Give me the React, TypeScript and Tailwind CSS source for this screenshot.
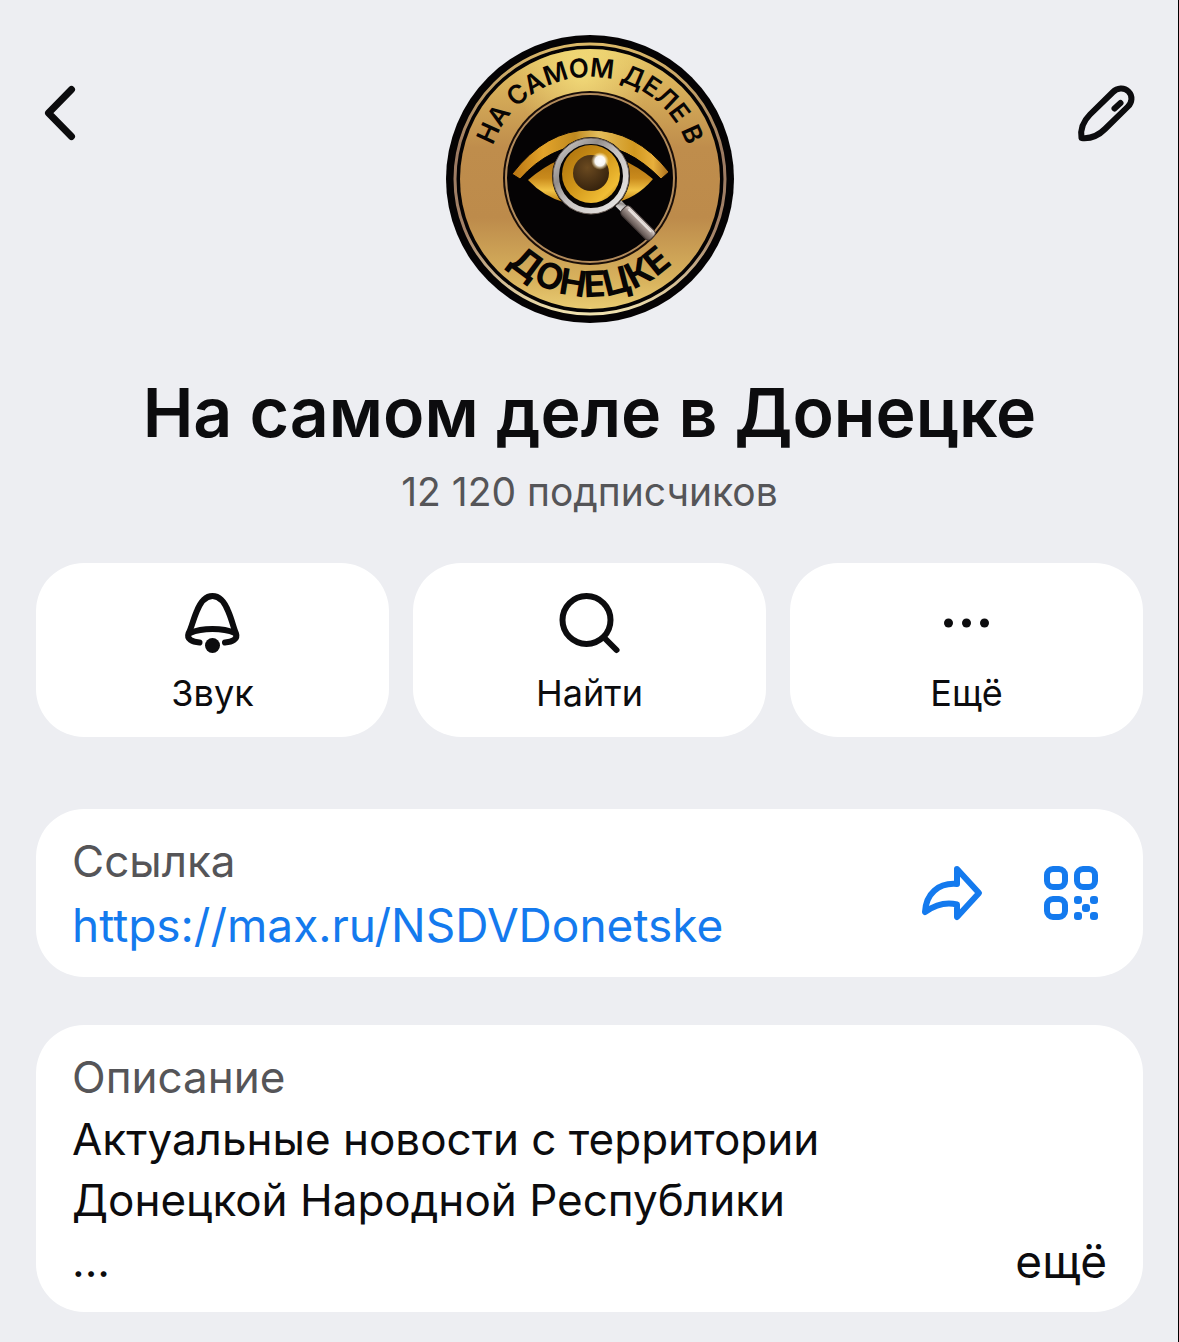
import type { ReactNode } from 'react';

function Emblem() {
  return (
    <svg viewBox="0 0 288 288" className="size-72" role="img" aria-label="На самом деле в Донецке">
      <defs>
        <linearGradient id="gold" x1="0" y1="0" x2="0" y2="1">
          <stop offset="0" stopColor="#e6c766" />
          <stop offset="0.14" stopColor="#d8b05a" />
          <stop offset="0.38" stopColor="#bf8d4c" />
          <stop offset="0.65" stopColor="#bd8b4b" />
          <stop offset="0.9" stopColor="#d9b45e" />
          <stop offset="1" stopColor="#e9cb72" />
        </linearGradient>
        <radialGradient id="shine" cx="0.47" cy="0.1" r="0.26">
          <stop offset="0" stopColor="#fff08a" stopOpacity="0.6" />
          <stop offset="1" stopColor="#fff08a" stopOpacity="0" />
        </radialGradient>
        <linearGradient id="rim" x1="0" y1="0" x2="0" y2="1">
          <stop offset="0" stopColor="#dcb968" />
          <stop offset="0.4" stopColor="#9c7a62" />
          <stop offset="0.7" stopColor="#a58368" />
          <stop offset="1" stopColor="#f0e2b0" />
        </linearGradient>
        <linearGradient id="lid" x1="0" y1="0" x2="1" y2="0">
          <stop offset="0" stopColor="#b87412" />
          <stop offset="0.2" stopColor="#e2a32a" />
          <stop offset="0.4" stopColor="#c08a20" />
          <stop offset="0.55" stopColor="#e3bd5c" />
          <stop offset="0.78" stopColor="#d1971f" />
          <stop offset="0.9" stopColor="#e8b03c" />
          <stop offset="1" stopColor="#a96d1c" />
        </linearGradient>
        <linearGradient id="eye" x1="0" y1="0" x2="0" y2="1">
          <stop offset="0" stopColor="#a96d0f" />
          <stop offset="0.5" stopColor="#c98a1c" />
          <stop offset="0.75" stopColor="#f2c446" />
          <stop offset="1" stopColor="#b9790e" />
        </linearGradient>
        <linearGradient id="iris" x1="0" y1="0" x2="1" y2="1">
          <stop offset="0" stopColor="#a86c0c" />
          <stop offset="0.45" stopColor="#cf9418" />
          <stop offset="0.8" stopColor="#f0bd35" />
          <stop offset="1" stopColor="#a76a08" />
        </linearGradient>
        <radialGradient id="pupil" cx="0.4" cy="0.35" r="0.7">
          <stop offset="0" stopColor="#6b4a20" />
          <stop offset="1" stopColor="#33200c" />
        </radialGradient>
        <linearGradient id="silver" x1="0" y1="0" x2="1" y2="1">
          <stop offset="0" stopColor="#d8d5d3" />
          <stop offset="0.3" stopColor="#928d8b" />
          <stop offset="0.5" stopColor="#c7c3c1" />
          <stop offset="1" stopColor="#ece9e7" />
        </linearGradient>
        <linearGradient id="handle" x1="0" y1="0" x2="0" y2="1">
          <stop offset="0" stopColor="#eee6e2" />
          <stop offset="0.4" stopColor="#a0928d" />
          <stop offset="1" stopColor="#574b48" />
        </linearGradient>
        <radialGradient id="glint">
          <stop offset="0" stopColor="#fff" />
          <stop offset="0.55" stopColor="#fff" stopOpacity="0.95" />
          <stop offset="1" stopColor="#ffe79a" stopOpacity="0" />
        </radialGradient>
        <path id="topArc" d="M41 145 A103 103 0 0 1 247 145" />
        <path id="bottomArc" d="M25 143 A119 119 0 0 0 263 143" />
      </defs>
      <circle cx="144" cy="144" r="144" fill="#050304" />
      <circle cx="144" cy="144" r="135" fill="none" stroke="url(#rim)" strokeWidth="3" />
      <circle cx="144" cy="144" r="130" fill="url(#gold)" />
      <circle cx="144" cy="144" r="130" fill="url(#shine)" />
      <circle cx="144" cy="143" r="87" fill="#1a0e08" />
      <circle cx="144" cy="143" r="84" fill="#050304" stroke="#b28b5c" strokeWidth="2" />
      <path d="M82 145 Q144 92 207 144 Q190 164 167 168 H120 Q98 162 82 145Z" fill="url(#eye)" />
      <path d="M66 139 Q100 95 144 95 Q190 95 223 137 L215 144 Q182 110 144 110 Q104 110 74 144Z" fill="url(#lid)" stroke="#050304" strokeWidth="1" />
      <path d="M79 144 Q106 112 144 112 Q183 112 210 144" fill="none" stroke="#050304" strokeWidth="4" />
      <g transform="rotate(45 145 141)">
        <rect x="182" y="137" width="12" height="8" fill="url(#silver)" />
        <rect x="191" y="135" width="41" height="12" rx="4" fill="url(#handle)" stroke="#453b39" />
        <path d="M195 138 H227" stroke="#f4efec" strokeWidth="2" opacity="0.8" />
      </g>
      <circle cx="145" cy="141" r="39" fill="#060403" />
      <circle cx="145" cy="141" r="35" fill="none" stroke="url(#silver)" strokeWidth="6" />
      <circle cx="145" cy="141" r="38" fill="none" stroke="#6e625c" strokeWidth="1" />
      <circle cx="145" cy="139" r="29" fill="url(#iris)" />
      <circle cx="145" cy="138" r="18" fill="url(#pupil)" />
      <circle cx="154" cy="126" r="9" fill="url(#glint)" />
      <g fill="#080504" fontFamily="Inter" textAnchor="middle">
        <text fontSize="26" fontWeight="600">
          <textPath href="#topArc" startOffset="50%">НА САМОМ ДЕЛЕ В</textPath>
        </text>
        <text fontSize="36" fontWeight="700">
          <textPath href="#bottomArc" startOffset="50%">ДОНЕЦКЕ</textPath>
        </text>
      </g>
    </svg>
  );
}

function BackIcon() {
  return (
    <svg viewBox="0 0 72 72" className="size-[72px]" fill="none" stroke="currentColor" strokeWidth="7" strokeLinecap="round" strokeLinejoin="round" aria-hidden="true">
      <path d="M47.5 13.5 L24.5 37 L47.5 60.5" />
    </svg>
  );
}

function PenIcon() {
  return (
    <svg viewBox="0 0 72 72" className="size-[72px]" fill="none" stroke="currentColor" strokeWidth="6" strokeLinecap="round" strokeLinejoin="round" aria-hidden="true">
      <path d="M10.500 62 C9 52.500 13 44.500 19 38.500 L42 16 C46 12 53 11 57.500 15.500 C62 20 61 26.500 57 30.500 L34 53 C28 59 20 63 10.500 62Z" />
      <path d="M43.500 32.500 L49.500 27" />
    </svg>
  );
}

function BellIcon() {
  return (
    <svg viewBox="0 0 72 72" className="size-[72px]" fill="none" stroke="currentColor" strokeWidth="6" strokeLinecap="round" strokeLinejoin="round" aria-hidden="true">
      <path d="M22.500 55.500 C15 55 9.500 52 11.500 46.500 C14.500 41 16 33 19.500 25 C23.500 14.500 28 9 35.500 9 C43 9 47.500 14.500 51.500 25 C55 33 56.500 41 59 46.500 C61 52 55.500 55 48 55.500" />
      <path d="M13 46 C21 42.500 28 42 35.500 42 C43 42 50 42.500 58 46" />
      <circle cx="35.500" cy="58.500" r="7.500" fill="currentColor" stroke="none" />
    </svg>
  );
}

function SearchIcon() {
  return (
    <svg viewBox="0 0 72 72" className="size-[72px]" fill="none" stroke="currentColor" strokeWidth="6" strokeLinecap="round" aria-hidden="true">
      <circle cx="32.500" cy="33" r="24" />
      <path d="M50.500 51 L62.500 63" />
    </svg>
  );
}

function DotsIcon() {
  return (
    <svg viewBox="0 0 72 72" className="size-[72px]" fill="currentColor" aria-hidden="true">
      <circle cx="17.500" cy="36" r="4.500" />
      <circle cx="35.500" cy="36" r="4.500" />
      <circle cx="53.500" cy="36" r="4.500" />
    </svg>
  );
}

function ShareIcon() {
  return (
    <svg viewBox="0 0 72 72" className="size-[72px]" fill="none" stroke="currentColor" strokeWidth="6" strokeLinejoin="round" aria-hidden="true">
      <path d="M42 12 L64 36 L42 60 V47.500 C30 44.500 20 48 10 55 C11 37 23 25.500 42 27Z" />
    </svg>
  );
}

function QrIcon() {
  return (
    <svg viewBox="0 0 72 72" className="size-[72px]" fill="none" stroke="currentColor" strokeWidth="6" aria-hidden="true">
      <rect x="12" y="12" width="18" height="18" rx="6" />
      <rect x="42" y="12" width="18" height="18" rx="6" />
      <rect x="12" y="42" width="18" height="18" rx="6" />
      <g fill="currentColor" stroke="none">
        <rect x="39" y="39" width="8" height="8" rx="3" />
        <rect x="55" y="39" width="8" height="8" rx="3" />
        <rect x="47" y="47" width="8" height="8" rx="3" />
        <rect x="39" y="55" width="8" height="8" rx="3" />
        <rect x="55" y="55" width="8" height="8" rx="3" />
      </g>
    </svg>
  );
}

function Action({ icon, label }: { icon: ReactNode; label: string }) {
  return (
    <button type="button" className="flex flex-1 flex-col items-center rounded-[48px] bg-white pt-6 pb-5 text-4xl leading-[48px]">
      {icon}
      <span className="mt-2.5">{label}</span>
    </button>
  );
}

export default function App() {
  return (
    <main className="min-h-screen bg-[#edeef2] px-9 pt-[35px] pb-[29px] font-['Inter',sans-serif] text-[#0c0c0e] shadow-[inset_-1px_0_0_#000]">
      <header className="flex items-start justify-between">
        <button type="button" aria-label="Назад" className="-ml-3 pt-[41px] pr-3">
          <BackIcon />
        </button>
        <Emblem />
        <button type="button" aria-label="Изменить" className="pt-[41px]">
          <PenIcon />
        </button>
      </header>

      <h1 className="mt-[49px] text-center text-[68px] leading-[80px] font-semibold">На самом деле в Донецке</h1>
      <p className="mt-4 text-center text-[39px] leading-[48px] text-[#555558]">12 120 подписчиков</p>

      <nav aria-label="Действия" className="mt-[47px] flex gap-6">
        <Action icon={<BellIcon />} label="Звук" />
        <Action icon={<SearchIcon />} label="Найти" />
        <Action icon={<DotsIcon />} label="Ещё" />
      </nav>

      <section className="mt-[72px] flex items-center rounded-[48px] bg-white px-9 py-5">
        <div className="flex-1">
          <h2 className="text-[44px] leading-[64px] text-[#555558]">Ссылка</h2>
          <a href="https://max.ru/NSDVDonetske" className="block text-[46px] leading-[64px] text-[#147aee]">
            https://max.ru/NSDVDonetske
          </a>
        </div>
        <div className="flex gap-12 text-[#147aee]">
          <button type="button" aria-label="Поделиться">
            <ShareIcon />
          </button>
          <button type="button" aria-label="QR-код">
            <QrIcon />
          </button>
        </div>
      </section>

      <section className="mt-12 rounded-[48px] bg-white px-9 py-5">
        <h2 className="text-[44px] leading-[64px] text-[#555558]">Описание</h2>
        <div className="text-[44px] leading-[61px]">
          <p>
            Актуальные новости с территории
            <br />
            Донецкой Народной Республики
          </p>
          <div className="flex justify-between">
            <span>...</span>
            <button type="button" className="text-[46px]">ещё</button>
          </div>
        </div>
      </section>
    </main>
  );
}
